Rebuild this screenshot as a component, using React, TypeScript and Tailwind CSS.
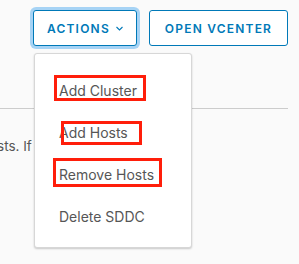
import React from 'react';

const items = ['Add Cluster', 'Add Hosts', 'Remove Hosts', 'Delete SDDC'];

// red annotation boxes, relative to the menu
const marks = [
  'left-[19px] top-[21px] w-[92px] h-[26px]',
  'left-[26px] top-[67px] w-[81px] h-[24px]',
  'left-[18px] top-[104px] w-[109px] h-[29px]',
];

const App = () => {
  return (
    <div className="relative w-[299px] h-[264px] overflow-hidden bg-[#fafafa] font-['Inter',sans-serif]">
      {/* Header buttons */}
      <div className="flex justify-end gap-3 pt-[10px] pr-[11px]">
        <button className="flex items-center gap-[6px] h-[36px] w-[104px] pl-[13px] pt-[1px] rounded-[3px] border border-[#0079b8] bg-white text-[#0079b8] text-[12px] font-semibold tracking-[0.1em] shadow-[0_0_0_3px_#a6d3f5]">
          ACTIONS
          <svg width="7" height="5" viewBox="0 0 7 5" className="-mt-[1px]">
            <path d="M0.5 1 L3.5 4 L6.5 1" fill="none" stroke="#0079b8" strokeWidth="1.1" />
          </svg>
        </button>
        <button className="h-[36px] w-[139px] pt-[1px] rounded-[3px] border border-[#0079b8] bg-white text-[#0079b8] text-[12px] font-semibold tracking-[0.1em]">
          OPEN VCENTER
        </button>
      </div>

      {/* Content behind menu */}
      <div className="mt-[62px] w-[288px] border-t border-[#cccccc]" />
      <p className="mt-[27px] -ml-[3px] whitespace-nowrap text-[13.5px] text-[#565656]">sts. If</p>

      {/* Dropdown menu */}
      <div className="absolute left-[34px] top-[53px] w-[158px] h-[195px] rounded-[3px] border border-[#d7d7d7] bg-white shadow-[0_1px_2px_rgba(0,0,0,0.2)]">
        <ul className="flex flex-col gap-[21px] pt-[26px] pl-[24px]">
          {items.map((item) => (
            <li key={item} className="h-[21px] leading-[21px] text-[14px] text-[#565656]">
              {item}
            </li>
          ))}
        </ul>
        {marks.map((m) => (
          <div key={m} className={`absolute border-[3px] border-[#ff1e0a] ${m}`} />
        ))}
      </div>
    </div>
  );
};

export default App;
